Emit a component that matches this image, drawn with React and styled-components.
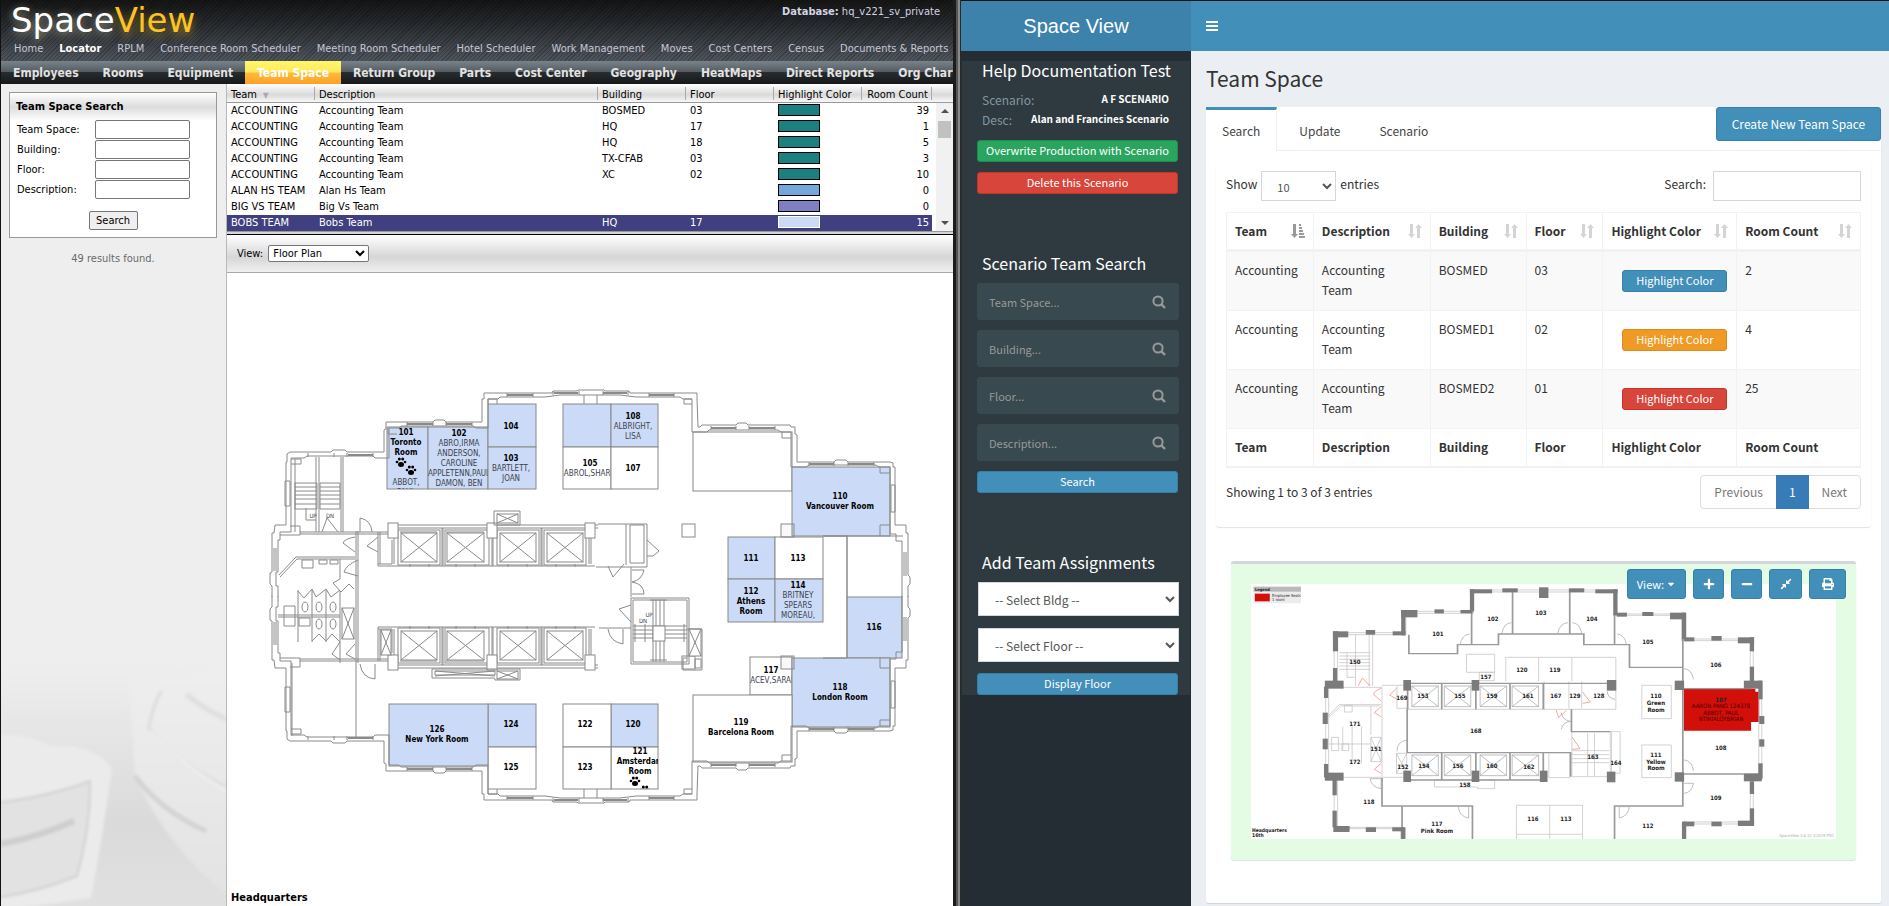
import React from 'react';
import styled, { createGlobalStyle } from 'styled-components';
import { FaPlus, FaMinus, FaPrint, FaCompressAlt, FaCaretDown } from 'react-icons/fa';

const TAHOMA = '"DejaVu Sans Condensed", "DejaVu Sans", sans-serif';
const SOURCE = '"Noto Sans CJK SC", "Open Sans", sans-serif';

const GlobalStyle = createGlobalStyle`
  *, *::before, *::after { box-sizing: border-box; }
  body { margin: 0; background: #fff; }
  button, input, select { font: inherit; margin: 0; }
  h1, h2, p { margin: 0; }
  a { text-decoration: none; color: inherit; }
`;

const Screen = styled.div`
  display: flex;
  height: 100vh;
  overflow: hidden;
`;

/* ---------- classic application ---------- */

const Classic = styled.section`
  flex: 952 1 0;
  min-width: 0;
  display: flex;
  flex-direction: column;
  border-left: 1px solid #111;
  font: 11px/16px ${TAHOMA};
  color: #000;
  background: #fff;
`;

const Banner = styled.header`
  height: 61px;
  flex: none;
  background:
    repeating-linear-gradient(135deg, rgba(0, 0, 0, 0.22) 0 1px, transparent 1px 3px),
    linear-gradient(#151515, #25282b 35%, #50565e);
  color: #d3d3e3;
`;

const BrandRow = styled.div`
  display: flex;
  justify-content: space-between;
  padding: 4px 13px 0 10px;
  height: 39px;
`;

const Brand = styled.div`
  font: 34px/32px "DejaVu Sans", sans-serif;
  color: #fff;
  text-shadow: 0 2px 8px rgba(240, 235, 200, 0.6);
  span { color: #fdc224; text-shadow: 0 4px 10px rgba(253, 194, 36, 0.5); }
`;

const ModuleNav = styled.nav`
  display: flex;
  gap: 16px;
  padding: 2px 0 0 13px;
  white-space: nowrap;
  overflow: hidden;
`;

const ModuleLink = styled.a`
  color: ${(p) => (p.$active ? '#fff' : '#c6c6d8')};
  font-weight: ${(p) => (p.$active ? 700 : 400)};
`;

const SectionNav = styled.nav`
  display: flex;
  flex: none;
  height: 23px;
  overflow: hidden;
  white-space: nowrap;
  background: linear-gradient(#7a838a, #535b61 48%, #282c2f 50%, #16181a);
`;

const SectionLink = styled.a`
  padding: 0 12px;
  font-size: 12px;
  font-weight: 700;
  line-height: 24px;
  color: ${(p) => (p.$active ? '#fff' : '#e2e2e2')};
  background: ${(p) => (p.$active ? 'linear-gradient(#fff66c, #ffe95e 48%, #fdbb38 52%, #ff9f28)' : 'none')};
`;

const ClassicBody = styled.div`
  flex: 1;
  min-height: 0;
  display: flex;
`;

const SearchColumn = styled.aside`
  width: 226px;
  flex: none;
  position: relative;
  padding: 8px 9px 0 8px;
  background: #eee;
  border-right: 1px solid #b8b8b8;
`;

const Backdrop = styled.svg`
  position: absolute;
  left: 0;
  bottom: 0;
  width: 225px;
  height: 240px;
`;

const SearchPanel = styled.form`
  position: relative;
  display: flex;
  flex-direction: column;
  border: 1px solid #999;
  background: linear-gradient(#fff, #dcdcdc 14px, #fff 28px);
  padding: 6px 6px 7px;
  height: 146px;
`;

const PanelTitle = styled.h2`
  font: 700 11px/16px ${TAHOMA};
  padding-bottom: 5px;
`;

const SearchFields = styled.div`
  display: grid;
  grid-template-columns: 78px 95px;
  row-gap: 1px;
  padding-left: 1px;
  align-items: center;
  label { line-height: 19px; }
  input {
    width: 95px;
    height: 19px;
    border: 1px solid #767676;
    border-radius: 2px;
    background: #fff;
  }
`;

const ClassicButton = styled.button`
  align-self: center;
  width: 49px;
  height: 19px;
  margin-top: auto;
  padding: 0;
  border: 1px solid #767676;
  border-radius: 2px;
  background: #efefef;
`;

const ResultNote = styled.p`
  position: relative;
  padding-top: 13px;
  text-align: center;
  color: #6a6a6a;
`;

const ResultColumn = styled.main`
  flex: 1;
  min-width: 0;
  display: flex;
  flex-direction: column;
`;

const GridFrame = styled.div`
  display: flex;
  flex: none;
  border-bottom: 1px solid #999;
`;

const headFill = 'linear-gradient(#fff, #dadada 60%, #f8f8f8)';

const TeamGrid = styled.table`
  flex: 1;
  min-width: 0;
  table-layout: fixed;
  border-collapse: separate;
  border-spacing: 0;
  white-space: nowrap;
  th {
    height: 19px;
    padding: 2px 0 0 4px;
    font-weight: 400;
    line-height: 15px;
    text-align: left;
    background: linear-gradient(#aaa, #aaa) right bottom 2px / 1px 13px no-repeat, ${headFill};
    border-bottom: 1px solid #999;
  }
  th:last-child { text-align: right; padding-right: 4px; }
  td { height: 16px; padding: 0 0 0 4px; line-height: 16px; overflow: hidden; }
  td:last-child { text-align: right; padding-right: 3px; }
`;

const GridRow = styled.tr`
  background: ${(p) => (p.$selected ? '#404080' : '#fff')};
  color: ${(p) => (p.$selected ? '#fff' : '#000')};
`;

const Swatch = styled.span`
  display: block;
  width: 42px;
  height: 12px;
  margin-bottom: 3px;
  border: 1px solid ${(p) => (p.$selected ? '#fff' : '#000')};
  background: ${(p) => p.$color};
`;

const SortMark = styled.span`
  margin-left: 6px;
  font-size: 8px;
  line-height: 8px;
  color: #aaa;
`;

const ScrollSide = styled.div`
  width: 21px;
  flex: none;
  display: flex;
  flex-direction: column;
  &::before { content: ''; height: 19px; background: ${headFill}; border-bottom: 1px solid #999; }
`;

const ScrollTrack = styled.div`
  flex: 1;
  margin-left: 4px;
  padding: 6px 2px;
  display: flex;
  flex-direction: column;
  align-items: center;
  background: #f1f1f1;
  i { width: 0; height: 0; border: 4px solid transparent; }
  i:first-child { border-top: 0; border-bottom-color: #505050; }
  i:last-child { border-bottom: 0; border-top-color: #505050; margin-top: auto; }
  b { width: 13px; height: 17px; margin-top: 8px; background: #c1c1c1; }
`;

const Splitter = styled.div`
  flex: none;
  height: 3px;
  background: #d4d4d4;
  border-bottom: 1px solid #000;
`;

const ViewBar = styled.div`
  flex: none;
  height: 38px;
  display: flex;
  align-items: center;
  gap: 5px;
  padding-left: 10px;
  background: linear-gradient(#fff, #d6d6d6 60%, #f0f0f0);
  border-bottom: 1px solid #aaa;
  select {
    width: 101px;
    height: 17px;
    padding: 0;
    border: 1px solid #767676;
    border-radius: 2px;
    background: #fff;
  }
`;

const PlanArea = styled.div`
  flex: 1;
  min-height: 0;
  overflow: hidden;
  svg { display: block; }
`;

const Rail = styled.div`
  width: 8px;
  flex: none;
  background: linear-gradient(90deg, #1c1c1c 0 3px, #555 3px 5px, #8a8a8a 5px 7px, #2a2a2a 7px);
`;

/* ---------- new application ---------- */

const Modern = styled.section`
  flex: 928 1 0;
  min-width: 0;
  display: grid;
  grid-template: 51px 1fr / 230px 1fr;
  font: 12px/20px ${SOURCE};
  color: #333;
`;

const Logo = styled.div`
  border-top: 1px solid #111;
  background: #3c82ab;
  color: #fff;
  font: 20px/50px "Liberation Sans", Arial, sans-serif;
  text-align: center;
`;

const TopBar = styled.header`
  border-top: 1px solid #111;
  background: #428fba;
  display: flex;
  align-items: center;
  padding-left: 15px;
  button { display: flex; padding: 0; border: 0; background: none; }
`;

const Sidebar = styled.aside`
  padding: 10px 1px 0;
  background: #242d33;
  overflow: hidden;
`;

const SideInner = styled.div`
  background: #2e3a40;
  padding: 0 11px 0 15px;
`;

const SideSection = styled.section`
  display: flex;
  flex-direction: column;
  min-height: ${(p) => p.$height || 0}px;
`;

const SideTitle = styled.h2`
  padding: 0 5px;
  height: 29px;
  font: 16px/18px ${SOURCE};
  color: #fff;
  white-space: nowrap;
`;

const Fact = styled.div`
  display: flex;
  justify-content: space-between;
  padding: 0 10px 0 5px;
  color: #8297a1;
  strong { font-size: 10px; line-height: 18px; color: #fff; white-space: nowrap; }
`;

const tones = {
  blue: ['#428fba', '#367fa9'],
  green: ['#2aa55f', '#1c8f4e'],
  red: ['#d8453b', '#c73328'],
  orange: ['#f09a26', '#dd8a1a'],
};

const SmallButton = styled.button`
  display: block;
  width: 201px;
  height: 22px;
  padding: 0 0 2px;
  border: 1px solid ${(p) => tones[p.$tone][1]};
  border-radius: 3px;
  background: ${(p) => tones[p.$tone][0]};
  color: #fff;
  font-size: 11px;
  line-height: 18px;
`;

const FactActions = styled.div`
  display: flex;
  flex-direction: column;
  gap: 10px;
  padding-top: 10px;
`;

const SideFields = styled.div`
  display: flex;
  flex-direction: column;
  gap: 10px;
`;

const SideSearch = styled.div`
  display: flex;
  align-items: center;
  height: 37px;
  padding: 0 13px 0 12px;
  border-radius: 3px;
  background: #384950;
  input {
    flex: 1;
    min-width: 0;
    padding: 0;
    border: 0;
    background: none;
    color: #ccc;
    font-size: 11px;
    outline: 0;
  }
  input::placeholder { color: #999; opacity: 1; }
  button { display: flex; padding: 0; border: 0; background: none; }
`;

const SideSelects = styled.div`
  display: flex;
  flex-direction: column;
  gap: 12px;
  padding: 0 0 11px 1px;
  select {
    width: 201px;
    height: 34px;
    padding: 0 0 0 12px;
    border: 1px solid #d2d6de;
    border-radius: 0;
    background: #fff;
    color: #555;
  }
`;

const Content = styled.main`
  min-width: 0;
  padding: 15px 8px 0 15px;
  background: #ebeff4;
  overflow: hidden;
`;

const PageTitle = styled.h1`
  font: 21px/24px ${SOURCE};
  height: 41px;
`;

const TabBox = styled.section`
  background: #fff;
  border-radius: 3px;
  box-shadow: 0 1px 1px rgba(0, 0, 0, 0.12);
  padding-bottom: 43px;
`;

const TabStrip = styled.nav`
  display: flex;
  height: 44px;
  border-bottom: 1px solid #f0f0f0;
`;

const Tab = styled.a`
  height: 44px;
  margin-right: 6px;
  padding: 11px 16px 0;
  border-top: 3px solid ${(p) => (p.$active ? '#428fba' : 'transparent')};
  border-right: 1px solid ${(p) => (p.$active ? '#f0f0f0' : 'transparent')};
  background: ${(p) => (p.$active ? '#fff' : 'transparent')};
  color: #444;
`;

const CreateButton = styled.button`
  width: 165px;
  height: 34px;
  margin-left: auto;
  padding: 0;
  border: 1px solid #367fa9;
  border-radius: 3px;
  background: #428fba;
  color: #fff;
`;

const TableBox = styled.div`
  margin: 10px;
  padding: 10px;
  height: 366px;
  border-radius: 3px;
  box-shadow: 0 1px 1px rgba(0, 0, 0, 0.12);
`;

const Controls = styled.div`
  display: flex;
  justify-content: space-between;
  height: 41px;
  label { display: flex; align-items: flex-start; gap: 4px; line-height: 26px; }
  select, input {
    height: 30px;
    border: 1px solid #d2d6de;
    border-radius: 0;
    background: #fff;
    color: #555;
  }
  select { width: 75px; padding: 2px 0 0 11px; font-size: 11px; }
  input { width: 148px; margin-left: 3px; }
`;

const DataTable = styled.table`
  width: 100%;
  table-layout: fixed;
  border-collapse: collapse;
  th, td {
    padding: 8px 8px 10px;
    border: 1px solid #f2f2f2;
    vertical-align: top;
    text-align: left;
    line-height: 20px;
    height: 59px;
  }
  th { height: 38px; padding-bottom: 7px; white-space: nowrap; }
  td:nth-child(2) { padding-right: 30px; }
  thead th { border-bottom: 3px solid #f2f2f2; }
  tfoot th { border-bottom: 2px solid #f2f2f2; }
  tbody tr:nth-child(odd) { background: #f9f9f9; }
`;

const HeadCell = styled.div`
  display: flex;
  justify-content: space-between;
  align-items: center;
  height: 20px;
`;

const ColorButton = styled(SmallButton)`
  width: 105px;
  margin: 10px 0 0 11px;
`;

const TableFoot = styled.div`
  display: flex;
  justify-content: space-between;
  padding-top: 7px;
  line-height: 34px;
`;

const Pager = styled.nav`
  display: flex;
  height: 34px;
  border: 1px solid #ddd;
  border-radius: 4px;
  a { padding: 0 13px; line-height: 32px; color: #777; }
`;

const PageNumber = styled.a`
  && { margin: -1px 0; line-height: 34px; background: #387cb7; color: #fff; }
`;

const MapCard = styled.section`
  position: relative;
  margin: 34px 25px 0;
  padding: 20px 20px 21px;
  background: #e4fce4;
  border-top: 3px solid #d2d6de;
  border-radius: 3px;
  box-shadow: 0 1px 1px rgba(0, 0, 0, 0.12);
  > svg { display: block; width: 100%; height: auto; background: #fff; }
`;

const MapTools = styled.div`
  position: absolute;
  top: 5px;
  right: 10px;
  display: flex;
  gap: 7px;
`;

const MapButton = styled.button`
  display: flex;
  align-items: center;
  justify-content: center;
  gap: 2px;
  width: ${(p) => p.$width}px;
  height: 30px;
  padding: 0;
  border: 1px solid #367fa9;
  border-radius: 3px;
  background: #428fba;
  color: #fff;
  font-size: 11px;
`;

/* ---------- drawings ---------- */

const SearchGlyph = () => (
  <svg width="14" height="14" viewBox="0 0 14 14" fill="none" stroke="#999" strokeWidth="2">
    <circle cx="6" cy="6" r="4.6" />
    <path d="M9.4 9.4 13 13" strokeWidth="2.4" />
  </svg>
);

const BarsGlyph = () => (
  <svg width="12" height="10" viewBox="0 0 12 10" fill="#fff">
    <path d="M0 0H12V2H0ZM0 4H12V6H0ZM0 8H12V10H0Z" />
  </svg>
);

const SortGlyph = ({ sorted }) => (
  <svg width="14" height="16" viewBox="0 0 14 16" fill={sorted ? '#999' : '#d4d4d4'}>
    <path d="M2 1H5V11H7L3.500 15 0 11H2Z" />
    {sorted ? (
      <path d="M8 1H10V3H8ZM8 4H11V6H8ZM8 7H12V9H8ZM8 10H13V12H8ZM8 13H14V15H8Z" />
    ) : (
      <path d="M9 15H12V5H14L10.500 1 7 5H9Z" />
    )}
  </svg>
);

const MonitorBackdrop = () => (
  <Backdrop viewBox="0 0 225 240" aria-hidden="true">
    <defs>
      <linearGradient id="fade" x1="0" y1="0" x2="0" y2="1">
        <stop offset="0" stopColor="#eee" />
        <stop offset="0.650" stopColor="#dadada" />
        <stop offset="1" stopColor="#e0e0e0" />
      </linearGradient>
      <linearGradient id="shine" x1="0" y1="0" x2="0" y2="1">
        <stop offset="0" stopColor="#eee" />
        <stop offset="1" stopColor="#e2e2e2" />
      </linearGradient>
      <filter id="soft"><feGaussianBlur stdDeviation="1.500" /></filter>
    </defs>
    <rect width="225" height="240" fill="url(#fade)" />
    <g filter="url(#soft)">
      <path d="M128 15 L240 0 V240 Q170 190 134 110Z" fill="url(#shine)" />
      <path d="M160 25 Q150 45 148 62 Q180 100 228 122" fill="none" stroke="#dcdcdc" strokeWidth="3" />
      <path d="M150 65 Q185 102 228 126" fill="none" stroke="#f2f2f2" strokeWidth="2" />
      <path d="M134 110 Q160 145 205 165" fill="none" stroke="#d3d3d3" strokeWidth="5" />
      <path d="M185 28 Q205 45 228 54" fill="none" stroke="#dfdfdf" strokeWidth="5" />
      <path d="M-5 70 Q20 65 50 80 Q95 78 111 103 Q100 180 90 232 Q50 238 -5 245Z" fill="#ebebeb" />
      <path d="M-5 137 Q50 130 89 115 Q90 160 76 210 Q40 225 -5 232Z" fill="#e2e2e2" stroke="#d0d0d0" strokeWidth="2" />
      <path d="M0 178 Q40 170 73 155" fill="none" stroke="#cdcdcd" strokeWidth="6" />
    </g>
  </Backdrop>
);

const BLUE = '#cbdbf7';

const rooms = [
  { x: 387, y: 427, w: 41, h: 62, blue: 1, cx: 406, top: 435, bold: ['101', 'Toronto', 'Room', '', ''], names: ['ABBOT,', 'PAUL'], paws: [[401, 462], [411, 470]] },
  { x: 428, y: 427, w: 60, h: 62, blue: 1, cx: 459, top: 436, bold: ['102'], names: ['ABRO,IRMA', 'ANDERSON,', 'CAROLINE', 'APPLETENN,PAUL', 'DAMON, BEN'] },
  { x: 488, y: 404, w: 48, h: 43, blue: 1, cx: 511, top: 429, bold: ['104'] },
  { x: 488, y: 447, w: 48, h: 42, blue: 1, cx: 511, top: 461, bold: ['103'], names: ['BARTLETT,', 'JOAN'] },
  { x: 563, y: 404, w: 48, h: 43, blue: 1 },
  { x: 563, y: 447, w: 48, h: 42, cx: 590, top: 466, bold: ['105'], names: ['ABROL,SHARO'] },
  { x: 611, y: 404, w: 47, h: 43, blue: 1, cx: 633, top: 419, bold: ['108'], names: ['ALBRIGHT,', 'LISA'] },
  { x: 611, y: 447, w: 47, h: 42, cx: 633, top: 471, bold: ['107'] },
  { x: 693, y: 432, w: 99, h: 59 },
  { x: 792, y: 467, w: 98, h: 69, blue: 1, cx: 840, top: 499, bold: ['110', 'Vancouver Room'] },
  { x: 728, y: 537, w: 47, h: 42, blue: 1, cx: 751, top: 561, bold: ['111'] },
  { x: 775, y: 537, w: 48, h: 42, cx: 798, top: 561, bold: ['113'] },
  { x: 728, y: 579, w: 47, h: 43, blue: 1, cx: 751, top: 594, bold: ['112', 'Athens', 'Room'] },
  { x: 775, y: 579, w: 48, h: 43, blue: 1, cx: 798, top: 588, bold: ['114'], names: ['BRITNEY', 'SPEARS', 'MOREAU,'] },
  { x: 847, y: 597, w: 55, h: 61, blue: 1, cx: 874, top: 630, bold: ['116'] },
  { x: 750, y: 657, w: 42, h: 38, cx: 771, top: 673, bold: ['117'], names: ['RACEV,SARAH'] },
  { x: 792, y: 658, w: 98, h: 69, blue: 1, cx: 840, top: 690, bold: ['118', 'London Room'] },
  { x: 693, y: 695, w: 99, h: 67, cx: 741, top: 725, bold: ['119', 'Barcelona Room'] },
  { x: 611, y: 704, w: 47, h: 43, blue: 1, cx: 633, top: 727, bold: ['120'] },
  { x: 611, y: 747, w: 47, h: 42, cx: 640, top: 754, bold: ['121', 'Amsterdam', 'Room'], paws: [[635, 781], [645, 790]] },
  { x: 563, y: 704, w: 48, h: 43, cx: 585, top: 727, bold: ['122'] },
  { x: 563, y: 747, w: 48, h: 42, cx: 585, top: 770, bold: ['123'] },
  { x: 488, y: 704, w: 48, h: 43, blue: 1, cx: 511, top: 727, bold: ['124'] },
  { x: 488, y: 747, w: 48, h: 42, cx: 511, top: 770, bold: ['125'] },
  { x: 389, y: 704, w: 99, h: 62, blue: 1, cx: 437, top: 732, bold: ['126', 'New York Room'] },
];

const PlanText = styled.text`
  font: ${(p) => (p.$bold ? 700 : 400)} ${(p) => p.$size || 8}px ${TAHOMA};
  fill: ${(p) => (p.$bold ? '#000' : '#3c424c')};
  text-anchor: middle;
`;

const Paw = ({ x, y }) => (
  <g transform={`translate(${x} ${y})`} fill="#000">
    <ellipse cx="0" cy="2.500" rx="3" ry="2.500" />
    <circle cx="-4" cy="0" r="1.300" />
    <circle cx="-1.700" cy="-3" r="1.500" />
    <circle cx="1.700" cy="-3" r="1.500" />
    <circle cx="4" cy="0" r="1.300" />
  </g>
);

const Room = ({ room }) => (
  <g>
    <rect x={room.x} y={room.y} width={room.w} height={room.h} fill={room.blue ? BLUE : '#fff'} stroke="#888" />
    <svg x={room.x} y={room.y} width={room.w} height={room.h} viewBox={`${room.x} ${room.y} ${room.w} ${room.h}`}>
      {(room.bold || []).map((t, i) => (
        <PlanText key={i} $bold x={room.cx} y={room.top + i * 10}>{t}</PlanText>
      ))}
      {(room.names || []).map((t, i) => (
        <PlanText key={t} x={room.cx} y={room.top + (room.bold.length + i) * 10}>{t}</PlanText>
      ))}
      {(room.paws || []).map(([x, y]) => <Paw key={x} x={x} y={y} />)}
    </svg>
  </g>
);

const Shaft = ({ x, y, w, h }) => (
  <g>
    <rect x={x} y={y} width={w} height={h} fill="#fff" />
    <path d={`M${x} ${y}l${w} ${h}M${x + w} ${y}l${-w} ${h}`} />
  </g>
);

/* Upper half of the building shell; the lower half is its reflection. */
const HalfShell = () => (
  <g>
    <path d="M591 390H578L577 391H553L552 393H484V399H482V422H446L444 420H435L433 422H386V429L384 430V452H347L345 450H333L331 452H290L287 454V462H286V525H275L274 533H272V572L270 573V584L272 586V597" />
    <path d="M591 395H560L545 397H500L498 399H488V428H476L473 426H401L399 428H389V458H375L373 456H307L304 458H291V532H280V540H278V572H276V586H278V597" />
    <path d="M591 390H604L605 391H629L630 393H697V399L698 427H700L702 425H736L738 423H746L748 425H790L791 427H795V434L797 435V462H834L836 460H846L848 462H890L893 463V467H895V525H906V533H908V575L910 577V584L908 586V597" />
    <path d="M591 395H620L636 397H680L683 399H692V432H707L709 430H778L781 432H791V467H806L809 465H876L879 467H890V534H896V541H902V597" />
    <path d="M308 453v4M334 453v4M347 453v4M373 453v4M407 422v4M433 422v4M446 422v4M472 422v4M507 393v4M533 393v4M553 391v4M579 391v4M603 391v4M628 391v4M649 393v4M674 393v4M711 426v4M736 426v4M749 426v4M775 426v4M809 462v4M834 462v4M848 462v4M874 462v4" />
    <path d="M407 424h26M446 424h26M507 395h26M554 393h24M603 393h24M649 395h25M711 428h25M749 428h26M809 464h25M848 464h26M348 455h25" strokeWidth="2" />
    <path d="M285 481h5v25h-5zM274 548v23M276 548v23M891 485h4v27h-4zM904 552v24M906 552v24M584 395v9M597 395v9M488 404v-5h9v5M692 399h-8v5h8M291 459h10v5h-10M880 467v6h10M880 536v-11h10M300 526v9h-20M290 526h10M782 432v6h9" />
    <rect x="682" y="524" width="13" height="13" />
    <rect x="781" y="524" width="13" height="13" fill="#888" fillOpacity="0.05" />
  </g>
);

const HalfCore = () => (
  <g>
    <path d="M388 525H598M388 528H598M378 566H595M378 532V566M380 532V564M392 540V564H378M394 528V564M442 528V566M443 528V566M492 528V566M493 528V566M541 528V566M542 528V566M589 538V564M591 538V564M300 532H388M300 534H388M400 532H437M446 532H484" />
    <Shaft x={401} y={533} w={36} h={29} />
    <Shaft x={447} y={533} w={37} h={29} />
    <Shaft x={500} y={533} w={36} h={29} />
    <Shaft x={547} y={533} w={36} h={29} />
    <rect x="398" y="530" width="42" height="35" />
    <rect x="445" y="530" width="44" height="35" />
    <rect x="497" y="530" width="42" height="35" />
    <rect x="544" y="530" width="42" height="35" />
    <path d="M410 564v3M429 564v3M456 564v3M475 564v3M508 564v3M527 564v3M556 564v3M575 564v3" />
    <rect x="388" y="523" width="10" height="15" fill="#fff" />
    <rect x="487" y="523" width="10" height="15" fill="#fff" />
    <rect x="585" y="523" width="10" height="15" fill="#fff" />
  </g>
);

const MIRROR = 'matrix(1 0 0 -1 0 1193)';

const LargePlan = () => (
  <svg width="726" height="633" viewBox="227 273 726 633" role="img" aria-label="Headquarters floor plan">
    {rooms.map((r, i) => <Room key={i} room={r} />)}
    <g fill="none" stroke="#8a8a8a">
      <HalfShell />
      <g transform={MIRROR}><HalfShell /></g>
      <HalfCore />
      <g transform={MIRROR}><HalfCore /></g>
      <path d="M823 536H847V658H823M823 536H903M847 536V597M598 524H647V567H596M626 524V565M630 525h14v38h-14zM647 540l12 11-6 5h-6" />
      <path d="M631 567v30M608 566l5 11 11-13M632 570h12q-2 10-12 12q12 2 12 12h-12" />
      <path d="M631 598h58v66h-58zM633 600h54v62h-54zM653 600v62M656 600v62M660 600v62M664 600v62M650 600h17M650 660h17M633 626h54M633 630h54M633 634h54M633 638h54M635 624v18M645 624v18M684 624v18M631 605l-12 4 12 13M599 628h32M608 629q2 13 15 15v-15M604 597" />
      <rect x="653" y="626" width="12" height="15" fill="#fff" />
      <Shaft x={689} y={629} w={12} h={27} />
      <path d="M687 629h15v41h-19v-12h4M695 659h6v9h-6z" />
      <path d="M494 511h26v14h-26zM432 669h88v11h-25l-1-2h-62zM435 671h60v4h-60z" />
      <Shaft x={497} y={514} w={21} h={9} />
      <Shaft x={497} y={671} w={21} h={8} />
      <path d="M435 671l60 5M435 676l60-5" />
      <path d="M316 457v75M319 457v75M341 457v75M343 457v75M295 459v73M295 483h22v26h-22zM295 487h22M295 491h22M295 495h22M295 499h22M295 504h22M320 483h20v26h-20zM320 487h20M320 491h20M320 495h20M320 499h20M320 504h20M306 508v12h10M322 532l5-14 11 14M360 532v-14q11 2 12 14" />
      <path d="M356 531v132M358 531v132M292 663V736M356 663V737M358 560q-12 5-14 12l14 4M355 537q-11 2-12 6l12 9M378 537l-11 9 11 6" />
      <path d="M279 575L296 557H355M280 577L297 559H355M340 559v20M340 579l-7 4 8 9 8-8 5 5M340 591v72M278 615H340M278 617H340M298 590v52M312 590v52M326 590v52M298 591l6 7 8-9 4 8 10-8 5 8 9-7M312 641l7-7 7 7 6-7 8 8" />
      <path d="M302 560h11v8h-11zM319 560h8v4h-8zM330 560h8v4h-8zM284 606h11v20h-11zM299 618h11v8h-11z" />
      <ellipse cx="305" cy="607" rx="3" ry="5" /><ellipse cx="319" cy="607" rx="3" ry="5" /><ellipse cx="333" cy="607" rx="3" ry="5" />
      <ellipse cx="319" cy="624" rx="3" ry="5" /><ellipse cx="333" cy="624" rx="3" ry="5" />
      <Shaft x={342} y={608} w={12} h={31} />
      <Shaft x={381} y={630} w={10} h={25} />
      <path d="M340 642l-8 12 8 6M355 644l-9 10 9 5M360 664q2 14 15 15v-15" />
      <path d="M388 428v6h9" />
    </g>
    <PlanText $size={6} x="313" y="518">UP</PlanText>
    <PlanText $size={6} x="330" y="518">DN</PlanText>
    <PlanText $size={6} x="649" y="617">UP</PlanText>
    <PlanText $size={6} x="643" y="623">DN</PlanText>
    <text x="231" y="901" fontFamily={TAHOMA} fontSize="11" fontWeight="700">Headquarters</text>
  </svg>
);

/* Survey units of the small plan, turned into its pixels. */
const sx = (v) => Math.round((v - 73) * 0.4267);
const sy = (v) => Math.round((v - 102) / 3);

const piers = [
  [265, 244, 36, 18], [265, 244, 12, 60], [342, 240, 22, 14], [405, 244, 30, 12], [425, 180, 38, 22], [425, 180, 10, 76],
  [503, 178, 22, 12], [564, 180, 28, 10], [586, 118, 52, 12], [586, 118, 10, 66], [662, 115, 36, 12], [748, 112, 22, 32],
  [818, 115, 36, 12], [880, 118, 52, 12], [922, 118, 10, 78], [930, 188, 24, 12], [990, 186, 26, 12], [1055, 188, 36, 20],
  [1083, 188, 10, 80], [1088, 262, 24, 12], [1152, 258, 24, 14], [1214, 262, 38, 18], [1242, 262, 10, 42], [1242, 350, 10, 46],
  [1228, 392, 42, 24], [1262, 392, 10, 56], [1264, 498, 12, 24], [1264, 568, 12, 22], [1262, 640, 10, 46], [1228, 670, 42, 24],
  [1242, 694, 10, 38], [1242, 775, 10, 50], [1214, 812, 38, 16], [1152, 815, 24, 14], [1088, 815, 24, 14], [1083, 815, 10, 52],
  [265, 354, 10, 46], [246, 392, 44, 24], [244, 410, 10, 34], [241, 488, 12, 34], [241, 566, 12, 32], [244, 642, 10, 40],
  [246, 668, 44, 24], [264, 690, 10, 46], [264, 782, 10, 50], [266, 828, 38, 18], [342, 832, 24, 14], [404, 832, 28, 12],
  [425, 832, 10, 35], [430, 390, 18, 32], [590, 390, 18, 32], [907, 390, 22, 32], [1066, 392, 22, 28], [430, 662, 18, 34],
  [590, 662, 18, 34], [750, 662, 18, 34], [907, 665, 20, 32], [1066, 667, 22, 28],
];

const lifts = [[450, 408], [526, 408], [610, 408], [685, 408], [450, 615], [526, 615], [610, 615], [685, 615]];

const miniLabels = [
  ['101', 511, 253], ['102', 639, 207], ['103', 753, 190], ['104', 873, 206], ['105', 1004, 276], ['106', 1163, 345],
  ['150', 316, 336], ['157', 624, 381], ['120', 709, 360], ['119', 785, 360], ['169', 426, 444], ['153', 475, 437],
  ['155', 563, 437], ['159', 638, 438], ['161', 722, 437], ['167', 788, 437], ['129', 833, 437], ['128', 889, 437],
  ['110', 1023, 438], ['Green', 1023, 458], ['Room', 1023, 479], ['171', 316, 523], ['172', 316, 637], ['151', 366, 597],
  ['168', 601, 543], ['152', 430, 652], ['154', 478, 649], ['156', 559, 649], ['160', 638, 649], ['162', 725, 652],
  ['163', 874, 620], ['164', 929, 640], ['111', 1023, 615], ['Yellow', 1023, 635], ['Room', 1023, 655], ['108', 1174, 595],
  ['109', 1163, 744], ['158', 574, 704], ['118', 349, 757], ['117', 508, 823], ['Pink Room', 508, 843], ['116', 733, 808],
  ['113', 811, 808], ['112', 1004, 828], ['107', 1174, 449],
];

const MiniText = styled.text`
  font: ${(p) => (p.$light ? 400 : 700)} ${(p) => p.$size || 6}px ${TAHOMA};
  fill: ${(p) => p.$fill || '#222'};
  text-anchor: ${(p) => p.$anchor || 'middle'};
`;

const SmallPlan = () => (
  <svg viewBox="0 0 585 255" role="img" aria-label="Floor 16 plan">
    <g transform="scale(0.4267 0.3333) translate(-73 -102)" fill="none" stroke="#999">
      <path d="M1087 416H1255V425H1264V516H1245V542H1087Z" fill="#d30f0a" stroke="none" />
      <g strokeWidth="2" stroke="#c4c4c4">
        <path d="M430 867V836H268V690H248V398H268V248H430V184H588V120H930V192H1088V267H1250V398H1270V690H1250V822H1088V867" />
        <path d="M424 867V832H276V686H255V402H276V254H436V190H594V126H924V196H1082V272H1243V404H1263V684H1243V816H1084V867" />
        <path d="M670 322H928V394M670 322V394M747 322V394M825 322V394M578 313H644V367H578ZM608 367H643V392H608ZM415 406H440V475H415ZM760 394V478M818 394V475M848 394V475M928 394V478H440M989 406H1058V506H989ZM989 585H1058V683H989ZM695 867V766H850V867M773 766V867M695 853H850M825 545H915V680H825ZM918 545H938V670H918ZM771 608H820V683H771ZM862 550V678M878 550V678M826 602H912M826 614H912M826 626H912M826 638H912M503 690H644V716H604V711H503Z" />
        <path d="M318 254V408M350 254V408M358 254V408M280 308H353M280 318H353M280 328H353M280 338H353M280 348H353M280 358H353M288 412H380V680M298 308V382H316M252 500L280 464H378M255 503L283 468H374M288 530V600M310 530V640M332 530V640M354 468V555M254 582H354M354 562H378V635H354ZM354 562L378 635M378 562L354 635M262 562H278V602H262ZM286 582H302V602H286ZM292 466H310V486H292ZM414 610H438V670H414ZM414 610L438 670M438 610L414 670M380 406H414M288 682H440" />
      </g>
      <g strokeWidth="4" stroke="#9a9a9a">
        <path d="M443 254V311H557V284H653V252H853V284H925M590 184V284M686 122V250M820 122V250M925 190V284H960V352H1085M1085 265V770M380 684V768H592V867M427 770V867M1085 768H925V867M440 400H928M439 478V608H822V680M824 478V545H915M440 400V478M520 400V478M600 400V478M680 400V478M758 400V478M440 690H760M520 610V690M600 610V690M680 610V690M758 610V690M1088 416H1245M1088 672H1228" />
      </g>
      <g strokeWidth="2" stroke="#aaa">
        {lifts.map(([x, y]) => (
          <path key={`${x}-${y}`} d={`M${x} ${y}h62v62h-62zl62 62M${x + 62} ${y}l-62 62`} />
        ))}
        <path d="M563 284q4-30 22-32M661 250q4-30 22-32M792 250q4-30 24-32M848 250q-4-30-22-32M953 284q-4-30-22-32M1110 388q-4-30-22-32M1110 662q-4-30-22-32M1088 700h22q-4 28-22 30M583 770v34q-22-4-24-34M936 804v-34h24q-4 30-24 34M352 686h26v30q-22-4-26-30M439 570q-24 4-24 34M800 488q4 24 22 26M800 538q4-22 22-24M908 424q0 20 18 24" />
      </g>
      <path d="M378 415q-18 10-18 18l18 20M378 470l-16 18 16 12M414 415l-16 20 16 12M324 408l10-24 18 24M378 640l-16 18 16 12M788 480l6 22 18-20M826 562l18 34-18 2M850 426l18 30-18 4" stroke="#ef8d80" strokeWidth="2" />
      <g fill="#7b7b7b" stroke="none">
        {piers.map(([x, y, w, h], i) => <rect key={i} x={x} y={y} width={w} height={h} />)}
      </g>
      <rect x="79" y="110" width="111" height="50" fill="#ececec" stroke="none" />
      <rect x="79" y="110" width="111" height="15" fill="#b9b9b9" stroke="none" />
      <rect x="82" y="131" width="35" height="23" fill="#d30f0a" stroke="none" />
    </g>
    {miniLabels.map(([t, x, y]) => (
      <MiniText key={t + y} x={sx(x)} y={sy(y) + 2}>{t}</MiniText>
    ))}
    <MiniText $light $fill="#4d0000" x={sx(1174)} y={sy(468) + 2}>AARON PANG 124378</MiniText>
    <MiniText $light $fill="#4d0000" x={sx(1174)} y={sy(488) + 2}>ABBOT, PAUL</MiniText>
    <MiniText $light $fill="#4d0000" x={sx(1174)} y={sy(508) + 2}>ÑTIRIALÓYBRIAN</MiniText>
    <MiniText $size={4} $anchor="start" x="4" y="7">Legend</MiniText>
    <MiniText $size={4} $light $anchor="start" x="21" y="13">Employee Seats</MiniText>
    <MiniText $size={4} $light $anchor="start" x="21" y="17">1 room</MiniText>
    <MiniText $size={5} $anchor="start" x="1" y="248">Headquarters</MiniText>
    <MiniText $size={5} $anchor="start" x="1" y="253">16th</MiniText>
    <MiniText $size={4} $light $fill="#aaa" $anchor="end" x="583" y="253">SpaceView 3.6.12 ©2019 PDC</MiniText>
  </svg>
);

/* ---------- data ---------- */

const modules = ['Home', 'Locator', 'RPLM', 'Conference Room Scheduler', 'Meeting Room Scheduler', 'Hotel Scheduler', 'Work Management', 'Moves', 'Cost Centers', 'Census', 'Documents & Reports'];
const sections = ['Employees', 'Rooms', 'Equipment', 'Team Space', 'Return Group', 'Parts', 'Cost Center', 'Geography', 'HeatMaps', 'Direct Reports', 'Org Char'];
const searchFields = ['Team Space', 'Building', 'Floor', 'Description'];

const TEAL = '#1c8080';
const teams = [
  ['ACCOUNTING', 'Accounting Team', 'BOSMED', '03', TEAL, 39],
  ['ACCOUNTING', 'Accounting Team', 'HQ', '17', TEAL, 1],
  ['ACCOUNTING', 'Accounting Team', 'HQ', '18', TEAL, 5],
  ['ACCOUNTING', 'Accounting Team', 'TX-CFAB', '03', TEAL, 3],
  ['ACCOUNTING', 'Accounting Team', 'XC', '02', TEAL, 10],
  ['ALAN HS TEAM', 'Alan Hs Team', '', '', '#72a8da', 0],
  ['BIG VS TEAM', 'Big Vs Team', '', '', '#8080c0', 0],
  ['BOBS TEAM', 'Bobs Team', 'HQ', '17', BLUE, 15],
];

const columns = ['Team', 'Description', 'Building', 'Floor', 'Highlight Color', 'Room Count'];
const columnShares = [87, 117, 96, 77, 134, 124];
const records = [
  ['BOSMED', '03', 'blue', 2],
  ['BOSMED1', '02', 'orange', 4],
  ['BOSMED2', '01', 'red', 25],
];

const ColumnHint = styled.col`
  width: ${(p) => p.$width};
`;

const ClassicApp = () => (
  <Classic>
    <Banner>
      <BrandRow>
        <Brand>Space<span>View</span></Brand>
        <p><b>Database:</b> hq_v221_sv_private</p>
      </BrandRow>
      <ModuleNav>
        {modules.map((m) => <ModuleLink key={m} href="#" $active={m === 'Locator'}>{m}</ModuleLink>)}
      </ModuleNav>
    </Banner>
    <SectionNav>
      {sections.map((s) => <SectionLink key={s} href="#" $active={s === 'Team Space'}>{s}</SectionLink>)}
    </SectionNav>
    <ClassicBody>
      <SearchColumn>
        <MonitorBackdrop />
        <SearchPanel>
          <PanelTitle>Team Space Search</PanelTitle>
          <SearchFields>
            {searchFields.map((f) => (
              <React.Fragment key={f}>
                <label htmlFor={`classic-${f}`}>{f}:</label>
                <input id={`classic-${f}`} type="text" />
              </React.Fragment>
            ))}
          </SearchFields>
          <ClassicButton type="button">Search</ClassicButton>
        </SearchPanel>
        <ResultNote>49 results found.</ResultNote>
      </SearchColumn>
      <ResultColumn>
        <GridFrame>
          <TeamGrid>
            <colgroup>
              <ColumnHint $width="88px" /><ColumnHint /><ColumnHint $width="88px" />
              <ColumnHint $width="88px" /><ColumnHint $width="88px" /><ColumnHint $width="70px" />
            </colgroup>
            <thead>
              <tr>{columns.map((c, i) => <th key={c}>{c}{i === 0 && <SortMark>▼</SortMark>}</th>)}</tr>
            </thead>
            <tbody>
              {teams.map(([team, desc, bldg, floor, color, count], i) => (
                <GridRow key={i} $selected={i === 7}>
                  <td>{team}</td><td>{desc}</td><td>{bldg}</td><td>{floor}</td>
                  <td><Swatch $color={color} $selected={i === 7} /></td>
                  <td>{count}</td>
                </GridRow>
              ))}
            </tbody>
          </TeamGrid>
          <ScrollSide><ScrollTrack><i /><b /><i /></ScrollTrack></ScrollSide>
        </GridFrame>
        <Splitter />
        <ViewBar>
          <label htmlFor="plan-view">View:</label>
          <select id="plan-view"><option>Floor Plan</option></select>
        </ViewBar>
        <PlanArea><LargePlan /></PlanArea>
      </ResultColumn>
    </ClassicBody>
  </Classic>
);

const ModernSidebar = () => (
  <Sidebar>
    <SideInner>
      <SideSection $height={193}>
        <SideTitle>Help Documentation Test</SideTitle>
        <Fact><span>Scenario:</span><strong>A F SCENARIO</strong></Fact>
        <Fact><span>Desc:</span><strong>Alan and Francines Scenario</strong></Fact>
        <FactActions>
          <SmallButton $tone="green">Overwrite Production with Scenario</SmallButton>
          <SmallButton $tone="red">Delete this Scenario</SmallButton>
        </FactActions>
      </SideSection>
      <SideSection $height={299}>
        <SideTitle>Scenario Team Search</SideTitle>
        <SideFields>
          {searchFields.map((f) => (
            <SideSearch key={f}>
              <input type="text" placeholder={`${f}...`} aria-label={f} />
              <button type="button" aria-label={`Search ${f}`}><SearchGlyph /></button>
            </SideSearch>
          ))}
          <SmallButton $tone="blue">Search</SmallButton>
        </SideFields>
      </SideSection>
      <SideSection>
        <SideTitle>Add Team Assignments</SideTitle>
        <SideSelects>
          <select aria-label="Building"><option>-- Select Bldg --</option></select>
          <select aria-label="Floor"><option>-- Select Floor --</option></select>
        </SideSelects>
        <SmallButton $tone="blue">Display Floor</SmallButton>
      </SideSection>
    </SideInner>
  </Sidebar>
);

const ModernContent = () => (
  <Content>
    <PageTitle>Team Space</PageTitle>
    <TabBox>
      <TabStrip>
        <Tab href="#" $active>Search</Tab>
        <Tab href="#">Update</Tab>
        <Tab href="#">Scenario</Tab>
        <CreateButton>Create New Team Space</CreateButton>
      </TabStrip>
      <TableBox>
        <Controls>
          <label>Show <select defaultValue="10"><option>10</option></select> entries</label>
          <label>Search: <input type="text" /></label>
        </Controls>
        <DataTable>
          <colgroup>
            {columnShares.map((n, i) => <ColumnHint key={i} $width={`${(n / 635) * 100}%`} />)}
          </colgroup>
          <thead>
            <tr>{columns.map((c, i) => <th key={c}><HeadCell>{c}<SortGlyph sorted={i === 0} /></HeadCell></th>)}</tr>
          </thead>
          <tbody>
            {records.map(([bldg, floor, tone, count]) => (
              <tr key={bldg}>
                <td>Accounting</td><td>Accounting Team</td><td>{bldg}</td><td>{floor}</td>
                <td><ColorButton $tone={tone}>Highlight Color</ColorButton></td>
                <td>{count}</td>
              </tr>
            ))}
          </tbody>
          <tfoot>
            <tr>{columns.map((c) => <th key={c}>{c}</th>)}</tr>
          </tfoot>
        </DataTable>
        <TableFoot>
          <span>Showing 1 to 3 of 3 entries</span>
          <Pager><a href="#">Previous</a><PageNumber href="#">1</PageNumber><a href="#">Next</a></Pager>
        </TableFoot>
      </TableBox>
      <MapCard>
        <SmallPlan />
        <MapTools>
          <MapButton $width={59}>View:<FaCaretDown size={10} /></MapButton>
          <MapButton $width={31} aria-label="Zoom in"><FaPlus size={12} /></MapButton>
          <MapButton $width={31} aria-label="Zoom out"><FaMinus size={12} /></MapButton>
          <MapButton $width={33} aria-label="Fit"><FaCompressAlt size={12} /></MapButton>
          <MapButton $width={37} aria-label="Print"><FaPrint size={12} /></MapButton>
        </MapTools>
      </MapCard>
    </TabBox>
  </Content>
);

export default function App() {
  return (
    <>
      <GlobalStyle />
      <Screen>
        <ClassicApp />
        <Rail />
        <Modern>
          <Logo>Space View</Logo>
          <TopBar><button type="button" aria-label="Toggle menu"><BarsGlyph /></button></TopBar>
          <ModernSidebar />
          <ModernContent />
        </Modern>
      </Screen>
    </>
  );
}
